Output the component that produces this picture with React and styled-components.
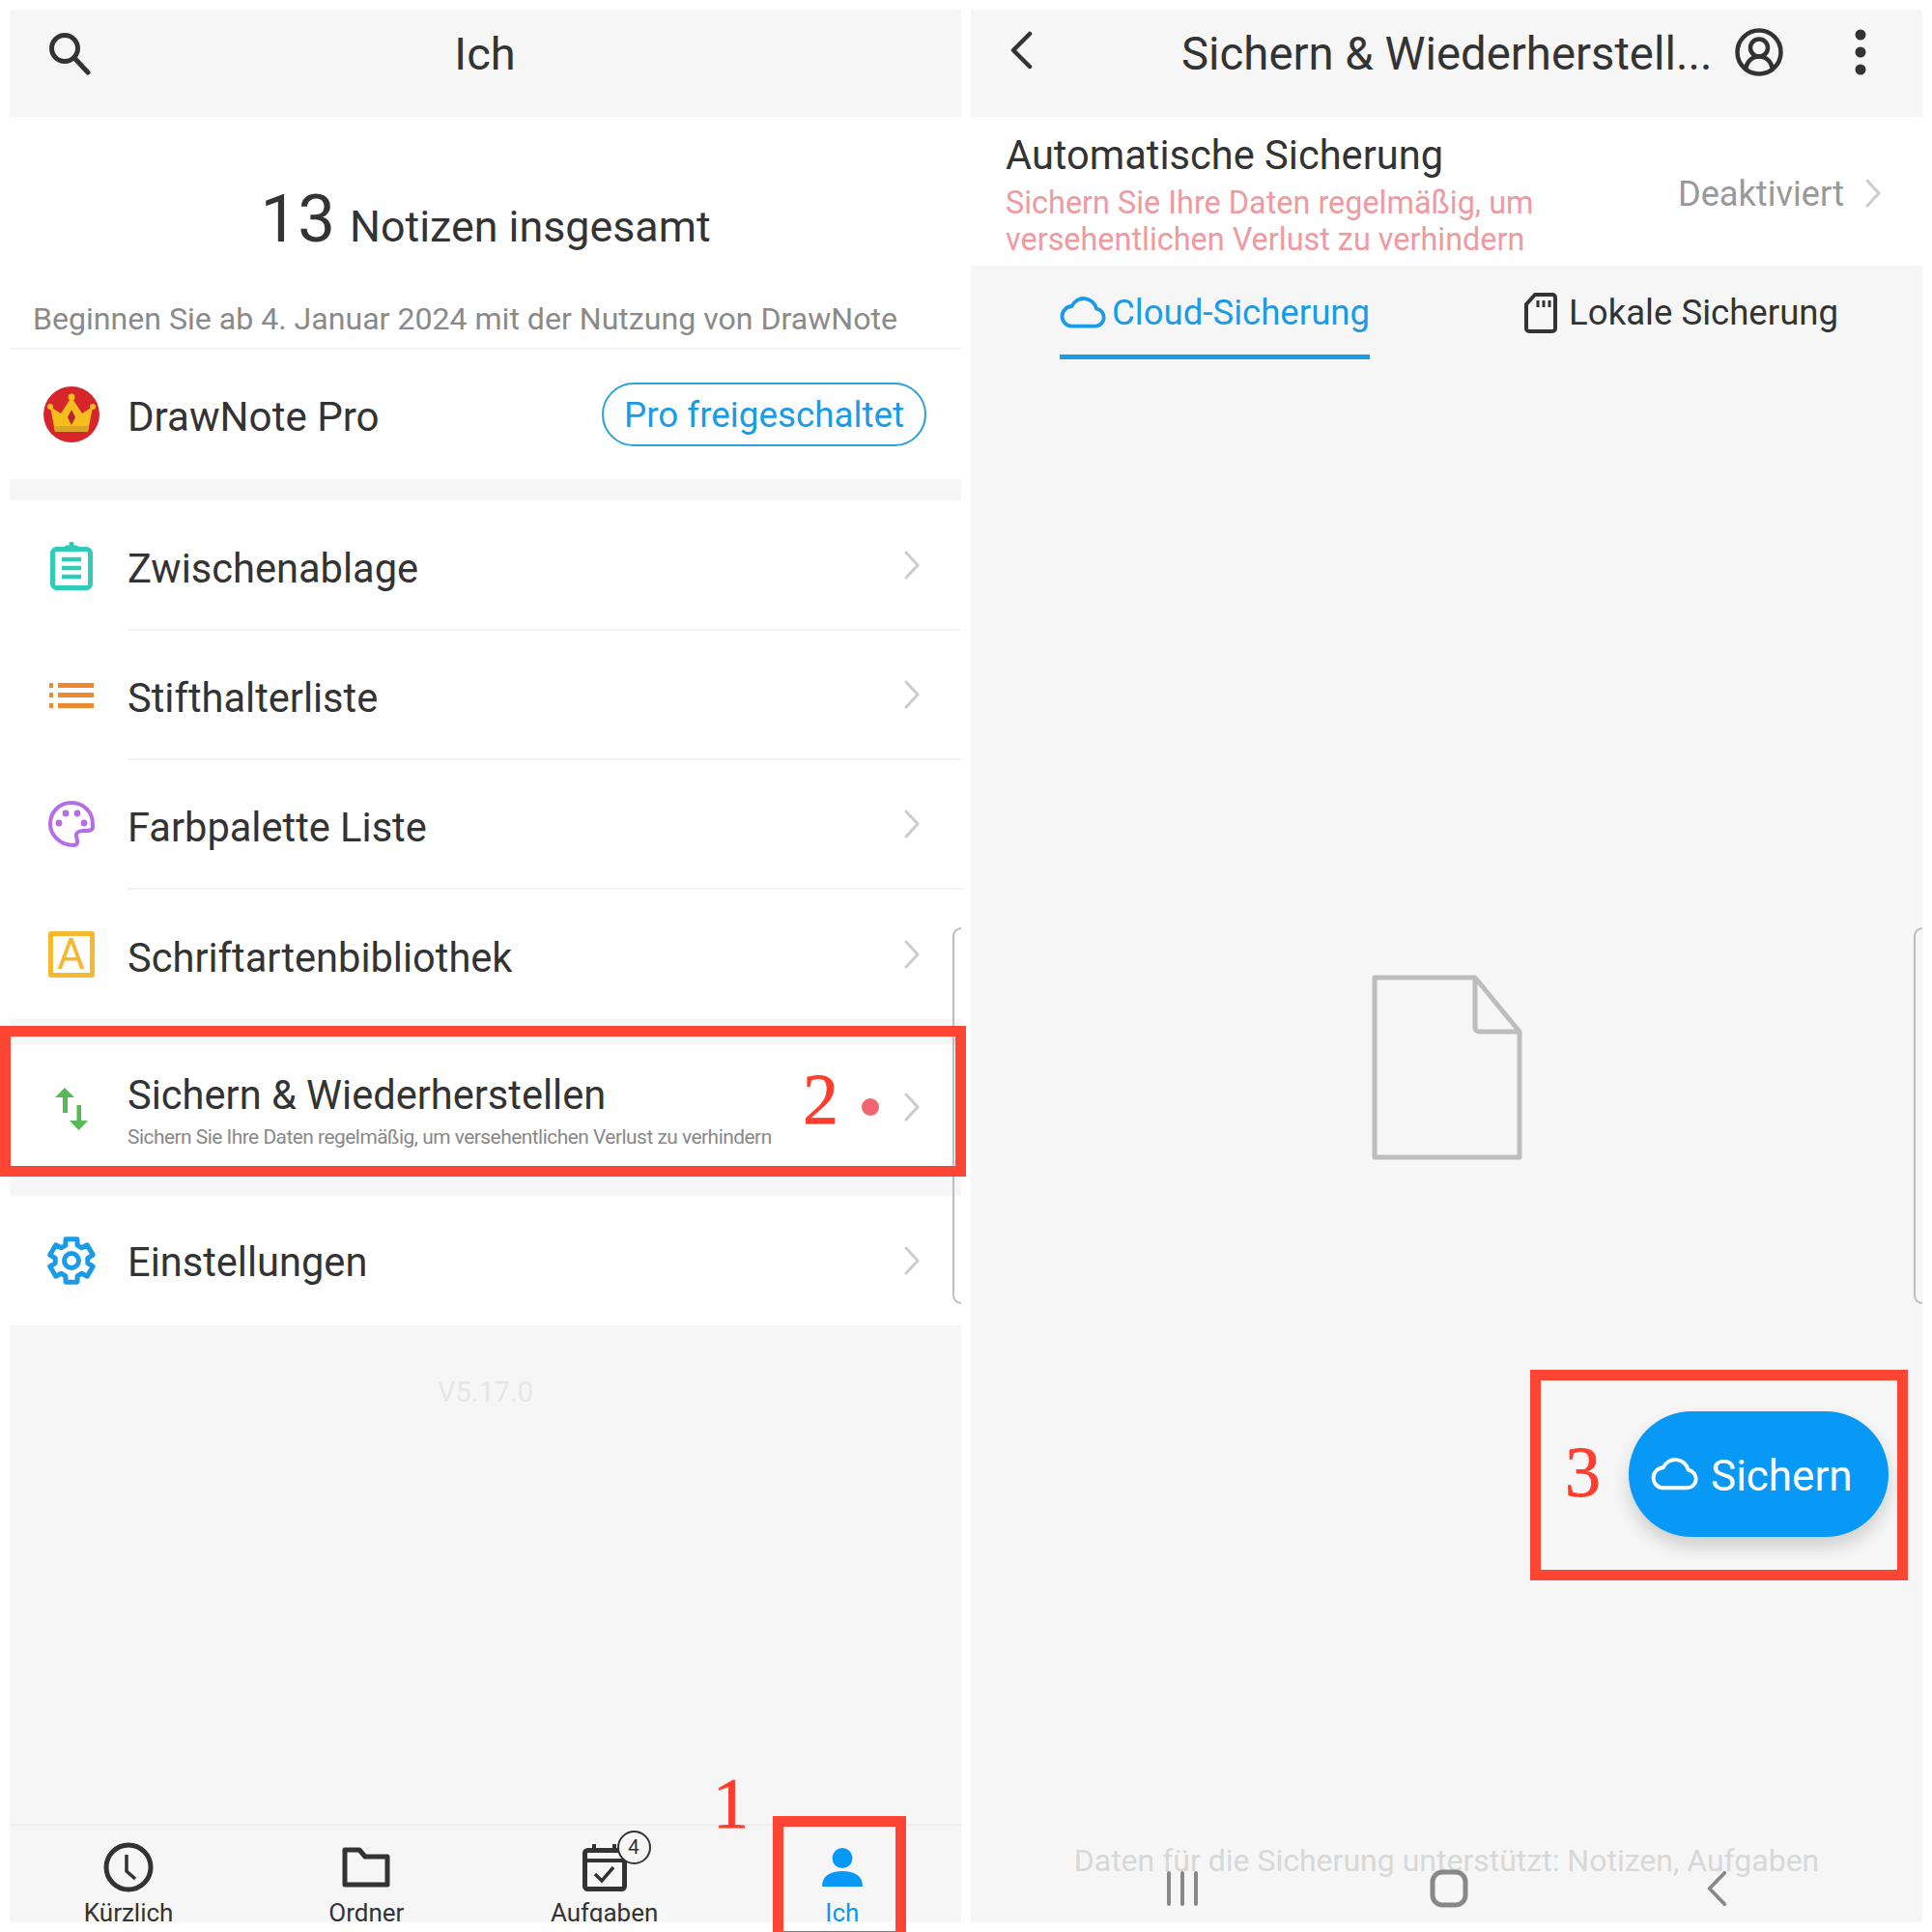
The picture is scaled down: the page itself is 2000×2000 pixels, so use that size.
import React from "react";
import styled, { createGlobalStyle } from "styled-components";
import { CircleUserRound } from "lucide-react";

const GlobalStyle = createGlobalStyle`
  html, body {
    margin: 0;
    background: #fff;
  }
  * {
    box-sizing: border-box;
  }
`;

const Page = styled.div`
  position: relative;
  width: 2000px;
  height: 2000px;
  padding: 10px;
  display: flex;
  gap: 10px;
  overflow: hidden;
  background: #fff;
  font-family: Roboto, "Liberation Sans", sans-serif;
  color: #333;
`;

const Panel = styled.div`
  position: relative;
  width: 985px;
  height: 1980px;
  display: flex;
  flex-direction: column;
  overflow: hidden;
  background: #f6f6f6;
`;

const Header = styled.div`
  height: 111px;
  flex-shrink: 0;
  display: flex;
  align-items: flex-start;
  padding: 22px 30px 0 ${props => props.$left || 39}px;
  background: #f6f6f6;
`;

const HeaderTitle = styled.div`
  flex: 1;
  text-align: center;
  font-size: 47px;
  line-height: 46px;
  padding-top: 1px;
  margin-left: -56px;
  white-space: nowrap;
`;

const BackTitle = styled.div`
  font-size: 47.3px;
  line-height: 46px;
  padding-top: 1px;
  margin-left: 154px;
  white-space: nowrap;
  width: 560px;
`;

const HeaderActions = styled.div`
  display: flex;
  align-items: center;
  gap: 72px;
  margin-left: 11px;
  margin-top: -5px;
`;

const Summary = styled.div`
  height: 241px;
  flex-shrink: 0;
  background: #fff;
  border-bottom: 2px solid #f2f2f2;
  padding-top: 61px;
`;

const CountLine = styled.div`
  display: flex;
  justify-content: center;
  align-items: baseline;
  gap: 15px;
  height: 90px;
  line-height: 90px;
`;

const Count = styled.span`
  font-size: 69px;
`;

const CountLabel = styled.span`
  font-size: 44.8px;
`;

const SinceText = styled.div`
  margin-top: 38px;
  padding-left: 24px;
  font-size: 32.1px;
  line-height: 40px;
  color: #8a8a8a;
  white-space: nowrap;
`;

const ProRow = styled.div`
  height: 134px;
  flex-shrink: 0;
  display: flex;
  align-items: center;
  background: #fff;
  padding: 0 36px 0 35px;
  margin-bottom: 22px;
`;

const ProLabel = styled.div`
  flex: 1;
  margin-left: 29px;
  padding-top: 4px;
  font-size: 42.1px;
`;

const ProBadge = styled.div`
  height: 66px;
  padding: 0 21px;
  border: 2.5px solid #2d9fe0;
  border-radius: 33px;
  display: flex;
  align-items: center;
  color: #1a9be8;
  font-size: 36.8px;
  white-space: nowrap;
`;

const MenuGroup = styled.div`
  flex-shrink: 0;
  background: #fff;
  padding-top: ${props => props.$top || 0}px;
  margin-bottom: ${props => props.$gap || 0}px;
`;

const MenuRow = styled.div`
  height: ${props => props.$height || 134}px;
  display: flex;
  align-items: center;
`;

const MenuIcon = styled.div`
  width: 123px;
  flex-shrink: 0;
  padding-left: 10px;
  display: flex;
  justify-content: center;
  margin-left: -3px;
`;

const MenuBody = styled.div`
  flex: 1;
  align-self: stretch;
  display: flex;
  align-items: center;
  padding-right: 42px;
  padding-bottom: ${props => props.$lift || 0}px;
  border-bottom: ${props => (props.$line ? "2px solid #f2f2f2" : "none")};
  margin-left: 2px;
`;

const MenuText = styled.div`
  flex: 1;
  min-width: 0;
`;

const MenuTitle = styled.div`
  font-size: 41.6px;
  line-height: 52px;
  padding-top: ${props => props.$drop || 4}px;
`;

const MenuSub = styled.div`
  font-size: 20.9px;
  line-height: 28px;
  margin-top: 3px;
  color: #888;
  letter-spacing: -0.5px;
  white-space: nowrap;
`;

const NewDot = styled.div`
  width: 18px;
  height: 18px;
  border-radius: 50%;
  background: #f0656e;
  margin-right: 25px;
`;

const LetterIcon = styled.div`
  width: 48px;
  height: 48px;
  border: 5px solid #f5b82e;
  border-radius: 3px;
  color: #f5b82e;
  font-size: 44px;
  line-height: 38px;
  text-align: center;
`;

const VersionArea = styled.div`
  flex: 1;
  text-align: center;
  padding-top: 49px;
  font-size: 29px;
  line-height: 40px;
  color: #e6e6e6;
`;

const TabBar = styled.div`
  height: 102px;
  flex-shrink: 0;
  display: grid;
  grid-template-columns: repeat(4, 1fr);
  border-top: 2px solid #eeeeee;
`;

const TabItem = styled.div`
  position: relative;
  height: 100px;
  display: flex;
  flex-direction: column;
  align-items: center;
  color: ${props => (props.$active ? "#0899f7" : "#333")};
  font-size: 26px;
`;

const TabIcon = styled.div`
  height: 75px;
  flex-shrink: 0;
  display: flex;
  align-items: center;
  padding-top: 10px;
`;

const TabLabel = styled.div`
  line-height: 30px;
  white-space: nowrap;
`;

const CountBubble = styled.div`
  position: absolute;
  left: 136px;
  top: 5px;
  width: 35px;
  height: 35px;
  border: 2px solid #333;
  border-radius: 50%;
  background: #f6f6f6;
  font-size: 21px;
  line-height: 31px;
  text-align: center;
`;

const AutoBackup = styled.div`
  height: 154px;
  flex-shrink: 0;
  background: #fff;
  display: flex;
  align-items: center;
  padding: 0 42px 0 36px;
`;

const AutoText = styled.div`
  flex: 1;
  padding-top: 10px;
`;

const AutoTitle = styled.div`
  font-size: 41.6px;
  line-height: 50px;
  margin-top: -3px;
`;

const AutoHint = styled.div`
  font-size: 32.4px;
  line-height: 37.5px;
  color: #ef9aa0;
  margin-top: 6px;
`;

const AutoState = styled.div`
  display: flex;
  align-items: center;
  gap: 21px;
  padding-top: 4px;
  font-size: 36.2px;
  color: #999;
`;

const Tabs = styled.div`
  height: 96px;
  flex-shrink: 0;
  display: flex;
  padding-left: 92px;
`;

const BackupTab = styled.div`
  height: 97px;
  display: flex;
  align-items: center;
  padding-top: 5px;
  gap: ${props => props.$gap}px;
  margin-left: ${props => props.$offset || 0}px;
  font-size: 36.6px;
  white-space: nowrap;
  color: ${props => (props.$active ? "#1a9be8" : "#333")};
  border-bottom: ${props => (props.$active ? "5px solid #1a9be8" : "5px solid transparent")};
`;

const EmptyArea = styled.div`
  flex: 1;
  display: flex;
  flex-direction: column;
  align-items: center;
  padding-top: 638px;
`;

const HintText = styled.div`
  margin-top: auto;
  margin-bottom: 44px;
  font-size: 32px;
  line-height: 40px;
  color: #d8d8d8;
  white-space: nowrap;
`;

const SystemNav = styled.div`
  position: absolute;
  left: 201px;
  bottom: 16px;
  display: flex;
  align-items: center;
  gap: 238px;
  height: 38px;
`;

const NavBack = styled.div`
  display: flex;
  margin-left: 8px;
`;

const SaveButton = styled.div`
  position: absolute;
  left: 681px;
  top: 1451px;
  width: 269px;
  height: 130px;
  border-radius: 65px;
  background: #0899f7;
  color: #fff;
  display: flex;
  align-items: center;
  padding-left: 23px;
  gap: 13px;
  font-size: 44px;
  box-shadow: 0 10px 18px rgba(0, 0, 0, 0.16);
`;

const SaveLabel = styled.span`
  padding-top: 4px;
`;

const EdgeHandle = styled.div`
  position: absolute;
  right: 0;
  top: 950px;
  width: 9px;
  height: 390px;
  border: 2px solid #bdbdbd;
  border-right: none;
  border-radius: 16px 0 0 16px;
`;

const Frame = styled.div`
  position: absolute;
  left: ${props => props.$x}px;
  top: ${props => props.$y}px;
  width: ${props => props.$w}px;
  height: ${props => props.$h}px;
  border: 11px solid #fe4433;
`;

const StepNumber = styled.div`
  position: absolute;
  left: ${props => props.$x}px;
  top: ${props => props.$y}px;
  font-family: "Liberation Serif", serif;
  font-size: 74px;
  line-height: 74px;
  color: #fe3d2e;
  -webkit-text-stroke: 0.8px #fe3d2e;
`;

function Chevron({ color = "#cccccc", height = 30 }) {
  return (
    <svg width={height * 0.6} height={height} viewBox="0 0 18 30" fill="none">
      <path d="M3 2l12 13L3 28" stroke={color} strokeWidth="3" strokeLinecap="round" strokeLinejoin="round" />
    </svg>
  );
}

function SearchIcon() {
  return (
    <svg width="46" height="46" viewBox="0 0 46 46" fill="none" stroke="#333" strokeWidth="5">
      <circle cx="18" cy="18" r="13.5" />
      <path d="M28 28l14 15" strokeLinecap="round" />
    </svg>
  );
}

function CrownIcon() {
  return (
    <svg width="58" height="58" viewBox="0 0 58 58">
      <circle cx="29" cy="29" r="29" fill="#d7262b" />
      <path d="M7 21l11 7 11-17 11 17 11-7-5 26H12z" fill="#f6bd1f" />
      <path d="M11 41h36l-1.300 6H12z" fill="#d9a62a" />
      <circle cx="29" cy="11" r="3.500" fill="#f6bd1f" />
      <circle cx="7" cy="21" r="3" fill="#f6bd1f" />
      <circle cx="51" cy="21" r="3" fill="#f6bd1f" />
      <path d="M29 24l4 8-4 8-4-8z" fill="#b8232a" />
    </svg>
  );
}

function ClipboardIcon() {
  return (
    <svg width="44" height="50" viewBox="0 0 44 50" fill="none" stroke="#2fcdb8">
      <rect x="2.500" y="7.500" width="39" height="40" rx="4" strokeWidth="5" />
      <path d="M17 6h10M22 2v6" strokeWidth="5" strokeLinecap="round" />
      <path d="M12 18h20M12 27h20M12 36h20" strokeWidth="4.500" />
    </svg>
  );
}

function ListIcon() {
  return (
    <svg width="46" height="26" viewBox="0 0 46 26" fill="#ec8a32">
      <rect x="0" y="0" width="4" height="5" />
      <rect x="0" y="10" width="4" height="5" />
      <rect x="0" y="21" width="4" height="5" />
      <rect x="9" y="0" width="37" height="5" />
      <rect x="9" y="10" width="37" height="5" />
      <rect x="9" y="21" width="37" height="5" />
    </svg>
  );
}

function PaletteIcon() {
  return (
    <svg width="50" height="50" viewBox="19 20 50 50" fill="none" stroke="#b36ee8" strokeWidth="4">
      <path d="M66 47C67 32 57 22 44 22C31 22 22 32 22 44C22 56 33 66 46 66C52 66 50 60 49 57C48 53 52 51 56 51C62 51 66 51 66 47Z" />
      <g fill="#b36ee8" stroke="none">
        <circle cx="38" cy="33" r="3.400" />
        <circle cx="50" cy="33" r="3.400" />
        <circle cx="31" cy="43" r="3.400" />
        <circle cx="57" cy="43" r="3.400" />
      </g>
    </svg>
  );
}

function TransferIcon() {
  return (
    <svg width="36" height="46" viewBox="26 23 36 46" fill="#55b956">
      <path d="M37 24L47 34H40V50H35V34H27z" />
      <path d="M51.500 68L61 58H54V42H49.500V58H42z" />
    </svg>
  );
}

// six teeth, one pointing straight up
function gearPath(outer, root) {
  const tip = (15 * Math.PI) / 180;
  const base = (21 * Math.PI) / 180;
  const at = (r, a) => `${(r * Math.sin(a)).toFixed(2)} ${(-r * Math.cos(a)).toFixed(2)}`;
  const parts = [];
  for (let i = 0; i < 6; i++) {
    const a = (i * Math.PI) / 3;
    parts.push(at(root, a - base), at(outer, a - tip), at(outer, a + tip), at(root, a + base));
  }
  return `M${parts.join("L")}Z`;
}

function GearIcon() {
  return (
    <svg width="52" height="52" viewBox="-26 -26 52 52" fill="none" stroke="#1a9be8" strokeWidth="5" strokeLinejoin="round">
      <path d={gearPath(23, 17)} />
      <circle r="7.500" />
    </svg>
  );
}

function ClockIcon() {
  return (
    <svg width="52" height="52" viewBox="0 0 52 52" fill="none" stroke="#333">
      <circle cx="26" cy="26" r="23" strokeWidth="5" />
      <path d="M24 13v17l9 8" strokeWidth="3.500" />
    </svg>
  );
}

function FolderIcon() {
  return (
    <svg width="50" height="42" viewBox="0 0 50 42" fill="none" stroke="#333" strokeWidth="5" strokeLinejoin="round">
      <path d="M3 3h15l6 7h23v29H3z" />
    </svg>
  );
}

function CalendarIcon() {
  return (
    <svg width="46" height="50" viewBox="0 0 46 50" fill="none" stroke="#333">
      <rect x="2.500" y="7.500" width="41" height="40" rx="3" strokeWidth="5" />
      <path d="M2 18h42" strokeWidth="4" />
      <path d="M12 1v9M33 1v9" strokeWidth="4" />
      <path d="M13 32l7 7 12-14" strokeWidth="3.500" />
    </svg>
  );
}

function PersonIcon() {
  return (
    <svg width="42" height="40" viewBox="0 0 42 40" fill="#0899f7">
      <ellipse cx="21" cy="10.500" rx="10.500" ry="10.500" />
      <path d="M0 40c0-11 8-16 21-16s21 5 21 16z" />
    </svg>
  );
}

function BackIcon({ width = 24, height = 40, color = "#333", stroke = 4.5 }) {
  return (
    <svg width={width} height={height} viewBox="0 0 24 40" fill="none" preserveAspectRatio="none">
      <path d="M21 3L4 20l17 17" stroke={color} strokeWidth={stroke} strokeLinecap="round" strokeLinejoin="round" />
    </svg>
  );
}

function DotsIcon() {
  return (
    <svg width="12" height="50" viewBox="0 0 12 50" fill="#333">
      <circle cx="6" cy="7" r="5.500" />
      <circle cx="6" cy="25" r="5.500" />
      <circle cx="6" cy="43" r="5.500" />
    </svg>
  );
}

function CloudIcon({ color, width = 48 }) {
  return (
    <svg width={width} height={width * 0.72} viewBox="0 0 50 36" fill="none">
      <path
        d="M12 33h26a9.500 9.500 0 0 0 1.500-18.900A14 14 0 0 0 13 11.500 10.800 10.800 0 0 0 12 33z"
        stroke={color}
        strokeWidth="4"
        strokeLinejoin="round"
      />
    </svg>
  );
}

function SdCardIcon() {
  return (
    <svg width="34" height="42" viewBox="0 0 34 42" fill="none" stroke="#333">
      <path d="M11 2h18a3 3 0 0 1 3 3v32a3 3 0 0 1-3 3H5a3 3 0 0 1-3-3V12z" strokeWidth="4" strokeLinejoin="round" />
      <path d="M14 8v7M20 8v7M26 8v7" strokeWidth="3" />
    </svg>
  );
}

function FileIcon() {
  return (
    <svg width="156" height="192" viewBox="0 0 156 192" fill="none" stroke="#bdbdbd" strokeWidth="5" strokeLinejoin="round">
      <path d="M3 3h104l46 56v130H3z" />
      <path d="M107 3v52a4 4 0 0 0 4 4h42" />
    </svg>
  );
}

function SystemBars() {
  return (
    <svg width="36" height="38" viewBox="0 0 36 38" stroke="#888" strokeWidth="4" strokeLinecap="round">
      <path d="M4 3v32M18 3v32M32 3v32" />
    </svg>
  );
}

function SystemHome() {
  return (
    <svg width="40" height="40" viewBox="0 0 40 40" fill="none" stroke="#888" strokeWidth="5">
      <rect x="3" y="3" width="34" height="34" rx="10" />
    </svg>
  );
}

const menuItems = [
  { icon: <ClipboardIcon />, label: "Zwischenablage" },
  { icon: <ListIcon />, label: "Stifthalterliste" },
  { icon: <PaletteIcon />, label: "Farbpalette Liste" },
  { icon: <LetterIcon>A</LetterIcon>, label: "Schriftartenbibliothek" }
];

export default function App() {
  return (
    <Page>
      <GlobalStyle />
      <Panel>
        <Header>
          <SearchIcon />
          <HeaderTitle>Ich</HeaderTitle>
        </Header>
        <Summary>
          <CountLine>
            <Count>13</Count>
            <CountLabel>Notizen insgesamt</CountLabel>
          </CountLine>
          <SinceText>Beginnen Sie ab 4. Januar 2024 mit der Nutzung von DrawNote</SinceText>
        </Summary>
        <ProRow>
          <CrownIcon />
          <ProLabel>DrawNote Pro</ProLabel>
          <ProBadge>Pro freigeschaltet</ProBadge>
        </ProRow>
        <MenuGroup $top={1} $gap={26}>
          {menuItems.map((item, i) => (
            <MenuRow key={item.label}>
              <MenuIcon>{item.icon}</MenuIcon>
              <MenuBody $line={i < menuItems.length - 1}>
                <MenuText>
                  <MenuTitle $drop={8}>{item.label}</MenuTitle>
                </MenuText>
                <Chevron />
              </MenuBody>
            </MenuRow>
          ))}
        </MenuGroup>
        <MenuGroup $gap={24}>
          <MenuRow $height={133}>
            <MenuIcon>
              <TransferIcon />
            </MenuIcon>
            <MenuBody $lift={4}>
              <MenuText>
                <MenuTitle $drop={8}>Sichern &amp; Wiederherstellen</MenuTitle>
                <MenuSub>Sichern Sie Ihre Daten regelmäßig, um versehentlichen Verlust zu verhindern</MenuSub>
              </MenuText>
              <NewDot />
              <Chevron />
            </MenuBody>
          </MenuRow>
        </MenuGroup>
        <MenuGroup>
          <MenuRow $height={134}>
            <MenuIcon>
              <GearIcon />
            </MenuIcon>
            <MenuBody>
              <MenuText>
                <MenuTitle>Einstellungen</MenuTitle>
              </MenuText>
              <Chevron />
            </MenuBody>
          </MenuRow>
        </MenuGroup>
        <VersionArea>V5.17.0</VersionArea>
        <TabBar>
          <TabItem>
            <TabIcon>
              <ClockIcon />
            </TabIcon>
            <TabLabel>Kürzlich</TabLabel>
          </TabItem>
          <TabItem>
            <TabIcon>
              <FolderIcon />
            </TabIcon>
            <TabLabel>Ordner</TabLabel>
          </TabItem>
          <TabItem>
            <TabIcon>
              <CalendarIcon />
            </TabIcon>
            <CountBubble>4</CountBubble>
            <TabLabel>Aufgaben</TabLabel>
          </TabItem>
          <TabItem $active>
            <TabIcon>
              <PersonIcon />
            </TabIcon>
            <TabLabel>Ich</TabLabel>
          </TabItem>
        </TabBar>
        <EdgeHandle />
      </Panel>
      <Panel>
        <Header $left={40}>
          <BackIcon />
          <BackTitle>Sichern &amp; Wiederherstell...</BackTitle>
          <HeaderActions>
            <CircleUserRound size={54} color="#333" strokeWidth={2} />
            <DotsIcon />
          </HeaderActions>
        </Header>
        <AutoBackup>
          <AutoText>
            <AutoTitle>Automatische Sicherung</AutoTitle>
            <AutoHint>
              Sichern Sie Ihre Daten regelmäßig, um
              <br />
              versehentlichen Verlust zu verhindern
            </AutoHint>
          </AutoText>
          <AutoState>
            Deaktiviert
            <Chevron />
          </AutoState>
        </AutoBackup>
        <Tabs>
          <BackupTab $active $gap={6}>
            <CloudIcon color="#1a9be8" />
            Cloud-Sicherung
          </BackupTab>
          <BackupTab $offset={160} $gap={12}>
            <SdCardIcon />
            Lokale Sicherung
          </BackupTab>
        </Tabs>
        <EmptyArea>
          <FileIcon />
          <HintText>Daten für die Sicherung unterstützt: Notizen, Aufgaben</HintText>
        </EmptyArea>
        <SaveButton>
          <CloudIcon color="#fff" width={49} />
          <SaveLabel>Sichern</SaveLabel>
        </SaveButton>
        <SystemNav>
          <SystemBars />
          <SystemHome />
          <NavBack>
            <BackIcon height={38} width={22} color="#888" stroke={4} />
          </NavBack>
        </SystemNav>
        <EdgeHandle />
      </Panel>
      <Frame $x={0} $y={1062} $w={1000} $h={156} />
      <Frame $x={800} $y={1880} $w={138} $h={130} />
      <Frame $x={1584} $y={1418} $w={391} $h={218} />
      <StepNumber $x={738} $y={1830}>1</StepNumber>
      <StepNumber $x={831} $y={1101}>2</StepNumber>
      <StepNumber $x={1620} $y={1487}>3</StepNumber>
    </Page>
  );
}
